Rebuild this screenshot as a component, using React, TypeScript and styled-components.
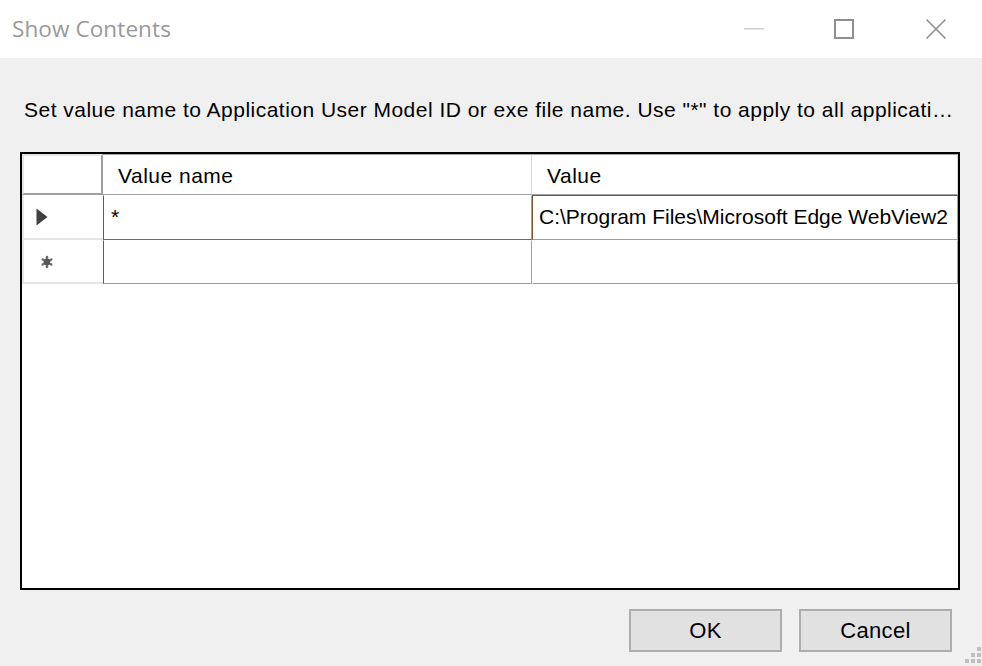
import React from 'react';
import styled, { createGlobalStyle } from 'styled-components';

const GlobalStyle = createGlobalStyle`
  html, body {
    margin: 0;
    padding: 0;
    width: 982px;
    height: 666px;
    overflow: hidden;
    background: #f0f0f0;
  }
`;

const Window = styled.div`
  width: 982px;
  height: 666px;
  display: flex;
  flex-direction: column;
  background: #f0f0f0;
  font-family: "Liberation Sans", Arial, sans-serif;
  color: #000;
  position: relative;
`;

const TitleBar = styled.div`
  height: 58px;
  flex: none;
  background: #fff;
  display: flex;
  align-items: center;
`;

const Title = styled.div`
  flex: 1;
  padding-left: 12px;
  font-family: "Open Sans", "Noto Sans", sans-serif;
  font-size: 22.5px;
  color: #999999;
  letter-spacing: 0.1px;
  padding-bottom: 2px;
`;

const Controls = styled.div`
  display: flex;
  height: 100%;
`;

const ControlButton = styled.div`
  width: 92px;
  height: 100%;
  display: flex;
  align-items: center;
  justify-content: center;
`;

const Body = styled.div`
  flex: 1;
  display: flex;
  flex-direction: column;
  padding: 40px 22px 0 20px;
`;

const Prompt = styled.div`
  height: 24px;
  line-height: 24px;
  font-size: 21px;
  letter-spacing: 0.48px;
  padding-left: 4px;
  padding-right: 4px;
  white-space: nowrap;
  overflow: hidden;
  text-overflow: ellipsis;
  margin-bottom: 30px;
`;

const Grid = styled.div`
  height: 438px;
  box-sizing: border-box;
  border: 2px solid #000;
  background: #fff;
  display: grid;
  grid-template-columns: 81px 429px 1fr;
  grid-template-rows: 41px 45px 44px;
  align-content: start;
`;

const Corner = styled.div`
  box-sizing: border-box;
  border-top: 2px solid #e6e6e6;
  border-left: 2px solid #e6e6e6;
  border-right: 2px solid #a0a0a0;
  border-bottom: 2px solid #a0a0a0;
  background: #fff;
`;

const HeaderCell = styled.div`
  box-sizing: border-box;
  border-top: 1px solid #a0a0a0;
  border-bottom: 1px solid #a0a0a0;
  border-right: 1px solid #d8d8d8;
  font-size: 21px;
  letter-spacing: 0.5px;
  padding-left: 15px;
  display: flex;
  align-items: center;
  padding-top: 2px;
`;

const RowHeader = styled.div`
  box-sizing: border-box;
  border-left: 2px solid #e6e6e6;
  border-bottom: 2px solid #e6e6e6;
  display: flex;
  align-items: center;
  padding-left: 12px;
`;

const Cell = styled.div<{ $first?: boolean; $current?: boolean; $edge?: boolean }>`
  box-sizing: border-box;
  font-size: 21px;
  display: flex;
  align-items: center;
  padding-left: ${(p) => (p.$first ? '7px' : '6px')};
  padding-bottom: 2px;
  white-space: nowrap;
  overflow: hidden;
  border-left: 1px solid ${(p) => (p.$first || p.$current ? '#7e5532' : 'transparent')};
  border-top: 1px solid ${(p) => (p.$current ? '#7e5532' : 'transparent')};
  border-bottom: 1px solid ${(p) => (p.$edge ? '#6f6a66' : '#a0a0a0')};
  border-right: 1px solid #a0a0a0;
`;

const Footer = styled.div`
  margin-top: 19px;
  display: flex;
  justify-content: flex-end;
  gap: 17px;
  padding-right: 8px;
`;

const Button = styled.button`
  width: 153px;
  height: 43px;
  box-sizing: border-box;
  border: 2px solid #adadad;
  background: #e1e1e1;
  font-family: "Liberation Sans", Arial, sans-serif;
  font-size: 22px;
  letter-spacing: 0.3px;
  color: #000;
  padding: 0;
`;

const Grip = styled.svg`
  position: absolute;
  right: 1px;
  bottom: 3px;
`;

const rows = [
  { name: '*', value: 'C:\\Program Files\\Microsoft Edge WebView2' },
  { name: '', value: '' },
];

export default function App() {
  return (
    <Window>
      <GlobalStyle />
      <TitleBar>
        <Title>Show Contents</Title>
        <Controls>
          <ControlButton>
            <svg width="22" height="4" viewBox="0 0 22 4" style={{ marginLeft: 4 }}>
              <rect x="1" y="1" width="20" height="1.5" fill="#cfcfcf" />
            </svg>
          </ControlButton>
          <ControlButton>
            <svg width="20" height="20" viewBox="0 0 20 20">
              <rect x="1" y="1" width="18" height="18" fill="none" stroke="#8f8f8f" strokeWidth="2" />
            </svg>
          </ControlButton>
          <ControlButton>
            <svg width="22" height="22" viewBox="0 0 22 22">
              <path d="M1.5 1.5 L20.5 20.5 M20.5 1.5 L1.5 20.5" stroke="#8f8f8f" strokeWidth="1.6" />
            </svg>
          </ControlButton>
        </Controls>
      </TitleBar>
      <Body>
        <Prompt>
          Set value name to Application User Model ID or exe file name. Use "*" to apply to all applications.
        </Prompt>
        <Grid>
          <Corner />
          <HeaderCell>Value name</HeaderCell>
          <HeaderCell>Value</HeaderCell>
          {rows.map((r, i) => (
            <React.Fragment key={i}>
              <RowHeader>
                {i === 0 ? (
                  <svg width="12" height="18" viewBox="0 0 12 18">
                    <path d="M0.5 0.5 L11.5 9 L0.5 17.5 Z" fill="#404040" />
                  </svg>
                ) : (
                  <svg width="14" height="14" viewBox="0 0 14 14" style={{ marginLeft: 4, marginTop: 2 }}>
                    <g stroke="#555" strokeWidth="2.6" strokeLinecap="round" opacity="0.85">
                      <path d="M7 2 L7 12 M2.7 4.5 L11.3 9.5 M11.3 4.5 L2.7 9.5" />
                    </g>
                    <circle cx="7" cy="7" r="3.2" fill="#555" />
                  </svg>
                )}
              </RowHeader>
              <Cell $first $edge={i === 0}>{r.name}</Cell>
              <Cell $current={i === 0}>{r.value}</Cell>
            </React.Fragment>
          ))}
        </Grid>
        <Footer>
          <Button>OK</Button>
          <Button>Cancel</Button>
        </Footer>
      </Body>
      <Grip width="16" height="16" viewBox="0 0 16 16">
        <g fill="#bfbfbf">
          <rect x="12" y="0" width="4" height="4" />
          <rect x="6" y="6" width="4" height="4" />
          <rect x="12" y="6" width="4" height="4" />
          <rect x="0" y="12" width="4" height="4" />
          <rect x="6" y="12" width="4" height="4" />
          <rect x="12" y="12" width="4" height="4" />
        </g>
      </Grip>
    </Window>
  );
}
